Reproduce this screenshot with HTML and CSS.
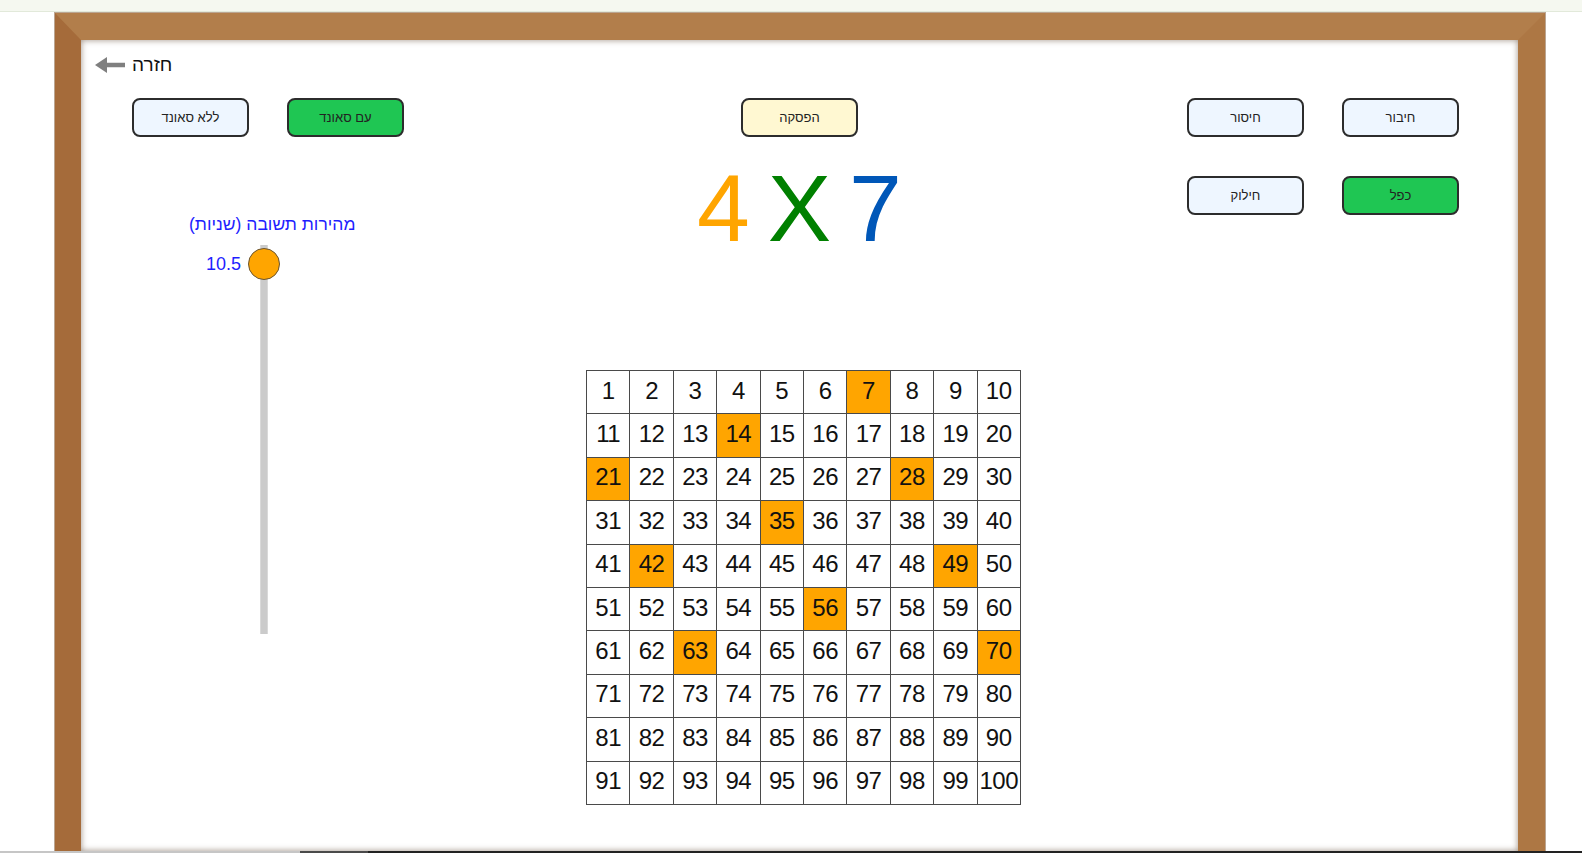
FILE: index.html
```html
<!DOCTYPE html>
<html lang="he">
<head>
<meta charset="utf-8">
<title>לוח הכפל</title>
<link rel="stylesheet" href="styles.css">
</head>
<body>
<div class="page">
  <div class="topstrip"></div>
  <div class="frame">
    <div class="board">
      <a class="back" href="#">
        <svg class="back-arrow" width="30" height="18" viewBox="0 0 30 18"><path d="M0 9 L12 1 L12 6.8 L30 6.8 L30 11.2 L12 11.2 L12 17 Z" fill="#7f7f7f"/></svg>
        <span dir="rtl">חזרה</span>
      </a>
      <div class="layout">
        <div class="col-left">
          <div class="btn-row">
            <button class="btn light" dir="rtl">ללא סאונד</button>
            <button class="btn green" dir="rtl">עם סאונד</button>
          </div>
          <div class="speed-label" dir="rtl">מהירות תשובה (שניות)</div>
          <div class="slider">
            <span class="slider-value">10.5</span>
            <span class="slider-knob"></span>
          </div>
        </div>
        <div class="col-center">
          <button class="btn yellow" dir="rtl">הפסקה</button>
          <div class="problem"><span class="n1">4</span> <span class="op">X</span> <span class="n2">7</span></div>
          <div class="numgrid">
            <div class="cell">1</div><div class="cell">2</div><div class="cell">3</div><div class="cell">4</div><div class="cell">5</div><div class="cell">6</div><div class="cell hit">7</div><div class="cell">8</div><div class="cell">9</div><div class="cell">10</div>
            <div class="cell">11</div><div class="cell">12</div><div class="cell">13</div><div class="cell hit">14</div><div class="cell">15</div><div class="cell">16</div><div class="cell">17</div><div class="cell">18</div><div class="cell">19</div><div class="cell">20</div>
            <div class="cell hit">21</div><div class="cell">22</div><div class="cell">23</div><div class="cell">24</div><div class="cell">25</div><div class="cell">26</div><div class="cell">27</div><div class="cell hit">28</div><div class="cell">29</div><div class="cell">30</div>
            <div class="cell">31</div><div class="cell">32</div><div class="cell">33</div><div class="cell">34</div><div class="cell hit">35</div><div class="cell">36</div><div class="cell">37</div><div class="cell">38</div><div class="cell">39</div><div class="cell">40</div>
            <div class="cell">41</div><div class="cell hit">42</div><div class="cell">43</div><div class="cell">44</div><div class="cell">45</div><div class="cell">46</div><div class="cell">47</div><div class="cell">48</div><div class="cell hit">49</div><div class="cell">50</div>
            <div class="cell">51</div><div class="cell">52</div><div class="cell">53</div><div class="cell">54</div><div class="cell">55</div><div class="cell hit">56</div><div class="cell">57</div><div class="cell">58</div><div class="cell">59</div><div class="cell">60</div>
            <div class="cell">61</div><div class="cell">62</div><div class="cell hit">63</div><div class="cell">64</div><div class="cell">65</div><div class="cell">66</div><div class="cell">67</div><div class="cell">68</div><div class="cell">69</div><div class="cell hit">70</div>
            <div class="cell">71</div><div class="cell">72</div><div class="cell">73</div><div class="cell">74</div><div class="cell">75</div><div class="cell">76</div><div class="cell">77</div><div class="cell">78</div><div class="cell">79</div><div class="cell">80</div>
            <div class="cell">81</div><div class="cell">82</div><div class="cell">83</div><div class="cell">84</div><div class="cell">85</div><div class="cell">86</div><div class="cell">87</div><div class="cell">88</div><div class="cell">89</div><div class="cell">90</div>
            <div class="cell">91</div><div class="cell">92</div><div class="cell">93</div><div class="cell">94</div><div class="cell">95</div><div class="cell">96</div><div class="cell">97</div><div class="cell">98</div><div class="cell">99</div><div class="cell">100</div>
          </div>
        </div>
        <div class="col-right">
          <div class="ops">
            <button class="btn light" dir="rtl">חיסור</button>
            <button class="btn light" dir="rtl">חיבור</button>
            <button class="btn light" dir="rtl">חילוק</button>
            <button class="btn green" dir="rtl">כפל</button>
          </div>
        </div>
      </div>
    </div>
  </div>
  <div class="bottombar"><span class="sb1"></span><span class="sb2"></span><span class="sb3"></span></div>
</div>
</body>
</html>
```
FILE: styles.css
```css
html, body {
  margin: 0;
  padding: 0;
  background: #ffffff;
}
body {
  font-family: "Liberation Sans", Arial, sans-serif;
  color: #111;
}
.page {
  height: 853px;
  display: flex;
  flex-direction: column;
  overflow: hidden;
}
.topstrip {
  height: 11px;
  flex: none;
  background: #f5f8f0;
  border-bottom: 1px solid #e2e9da;
}
.frame {
  flex: 1;
  min-height: 0;
  margin-top: 1px;
  margin-left: 55px;
  width: 1490px;
  box-sizing: border-box;
  border-style: solid;
  border-width: 27px 27px 0 26px;
  border-top-color: #b27e4b;
  border-left-color: #a56b3a;
  border-right-color: #ad7744;
  box-shadow: inset 0 0 0 1px rgba(110, 65, 25, 0.4), 0 0 0 1px rgba(120, 75, 35, 0.5);
  display: flex;
}
.board {
  flex: 1;
  background: #fff;
  box-shadow: inset 0 0 6px rgba(60, 30, 5, 0.5);
  display: flex;
  flex-direction: column;
}
.back {
  margin-top: 13px;
  height: 24px;
  padding-left: 14px;
  display: flex;
  align-items: center;
  gap: 7px;
  text-decoration: none;
  color: #111;
  font-size: 19px;
  align-self: flex-start;
}
.back-arrow {
  display: block;
}
.layout {
  margin-top: 21px;
  display: grid;
  grid-template-columns: 505px 434px 1fr;
  align-items: start;
}
.btn {
  width: 117px;
  height: 39px;
  box-sizing: border-box;
  border: 2px solid #2c2c2c;
  border-radius: 8px;
  font-family: "Liberation Sans", Arial, sans-serif;
  font-size: 13px;
  color: #222;
  padding: 0;
  display: block;
}
.btn.light { background: #eef6ff; }
.btn.green { background: #1fc653; }
.btn.yellow { background: #fff8d2; }

.btn-row {
  display: flex;
  gap: 38px;
  padding-left: 51px;
}
.speed-label {
  margin-top: 77px;
  padding-left: 108px;
  width: 200px;
  text-align: left;
  direction: rtl;
  unicode-bidi: plaintext;
  font-size: 17.5px;
  line-height: 20px;
  color: #1e1eff;
}
.slider {
  position: relative;
  margin-top: 11px;
  margin-left: 179px;
  width: 8px;
  height: 389px;
  background: #cbcbcb;
  box-shadow: inset 1px 0 0 #d9d9d9, inset -1px 0 0 #d9d9d9;
}
.slider-knob {
  position: absolute;
  left: -12px;
  top: 3px;
  width: 32px;
  height: 32px;
  box-sizing: border-box;
  border-radius: 50%;
  background: #ffa500;
  border: 1px solid #6a5532;
}
.slider-value {
  position: absolute;
  right: 27px;
  top: 9px;
  font-size: 18px;
  line-height: 20px;
  color: #1e1eff;
}
.col-center .btn {
  margin-left: 155px;
}
.problem {
  margin-top: 23.5px;
  padding-left: 111px;
  font-size: 95px;
  line-height: 95px;
  height: 95px;
  white-space: pre;
  word-spacing: -8.5px;
}
.n1 { color: #ffa500; }
.op { color: #008000; }
.n2 { color: #0057b8; }

.numgrid {
  margin-top: 114.5px;
  display: grid;
  grid-template-columns: repeat(10, 42.4px);
  grid-auto-rows: 42.4px;
  gap: 1px;
  width: max-content;
  border: 1px solid #4a4a4a;
  background: #4a4a4a;
}
.cell {
  background: #fff;
  display: flex;
  align-items: center;
  justify-content: center;
  padding-bottom: 3px;
  box-sizing: border-box;
  font-size: 24px;
  color: #111;
  letter-spacing: -0.5px;
}
.cell.hit {
  background: #ffa500;
}
.ops {
  padding-left: 167px;
  display: grid;
  grid-template-columns: 117px 117px;
  column-gap: 38px;
  row-gap: 39px;
}
.bottombar {
  flex: none;
  height: 2px;
  display: flex;
}
.sb1 { width: 300px; background: #c6c6c6; }
.sb2 { width: 68px; background: #4a4a4a; }
.sb3 { flex: 1; background: #222; }
```
